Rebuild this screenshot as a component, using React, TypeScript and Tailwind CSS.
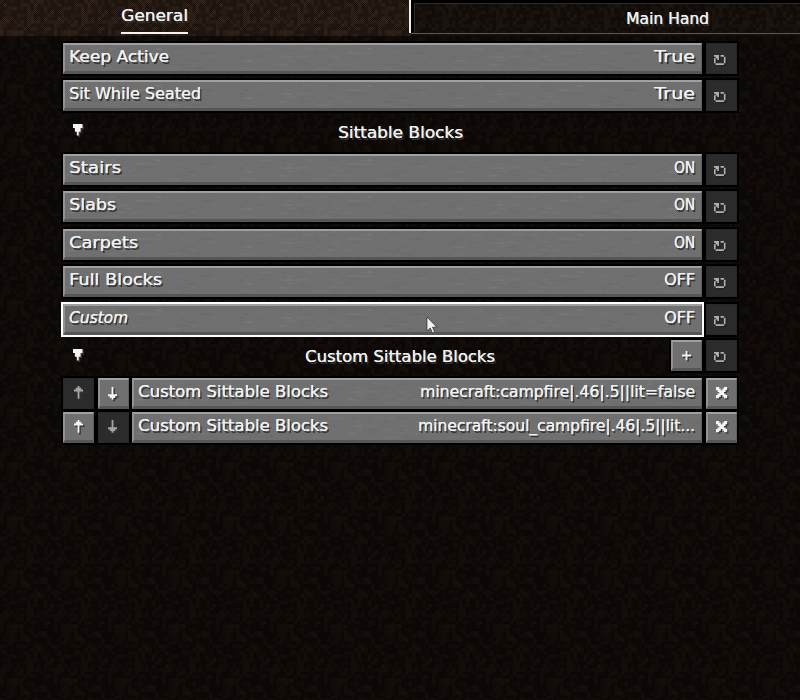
import { useLayoutEffect, useRef } from 'react'
import type { ReactNode } from 'react'

function Label({ text, width, className = '' }: { text: string; width: number; className?: string }) {
  const ref = useRef<HTMLSpanElement>(null)
  useLayoutEffect(() => {
    const el = ref.current
    if (!el) return
    el.style.transform = 'none'
    el.style.width = 'auto'
    const natural = el.getBoundingClientRect().width
    el.style.width = `${width}px`
    el.style.transform = `scaleX(${width / natural})`
  }, [text, width])
  return (
    <span ref={ref} className={`relative inline-block origin-left whitespace-pre text-left text-[16px] leading-[20px] text-[#f0f0f0] [text-shadow:0.2px_0_0_#f0f0f0,1.6px_1.6px_0_#343434] ${className}`}>
      {text}
    </span>
  )
}

const cells = Array.from({ length: 256 }, (_, i) => {
  const n = Math.sin(i * 91.731 + 17.13) * 43758.5453
  return n - Math.floor(n)
})

function Dirt({ id, base, light, strength }: { id: string; base: string; light: string; strength: number }) {
  return (
    <svg className="pointer-events-none absolute inset-0 h-full w-full">
      <defs>
        <pattern id={id} width="54" height="54" patternUnits="userSpaceOnUse">
          <rect width="54" height="54" fill={base} />
          {cells.map((v, i) => (
            <rect key={i} x={(i % 16) * 3.375} y={Math.floor(i / 16) * 3.375} width="3.4" height="3.4" fill={v > 0.5 ? light : '#000'} opacity={v > 0.5 ? (v - 0.5) * strength : 0.15} />
          ))}
        </pattern>
        <pattern id={`${id}-grid`} width="2" height="2" patternUnits="userSpaceOnUse">
          <rect width="1" height="1" fill="#000" opacity="0.3" />
          <rect x="1" y="1" width="1" height="1" fill="#000" opacity="0.3" />
        </pattern>
      </defs>
      <rect width="100%" height="100%" fill={`url(#${id})`} />
      <rect width="100%" height="100%" fill={`url(#${id}-grid)`} />
    </svg>
  )
}

function StoneGrain() {
  return (
    <svg className="pointer-events-none absolute inset-0 h-full w-full">
      <defs>
        <pattern id="grain" width="211" height="28" patternUnits="userSpaceOnUse">
          {cells.slice(0, 70).map((v, i) => (
            <rect key={i} x={v * 198} y={(i * 7.7) % 27} width={4 + (i % 4) * 3} height="1.5" fill={i % 2 ? '#fff' : '#000'} opacity="0.03" />
          ))}
        </pattern>
      </defs>
      <rect width="100%" height="100%" fill="url(#grain)" />
    </svg>
  )
}

const stone =
  'bg-[#707070] bg-[repeating-conic-gradient(#6b6b6b_0_25%,#747474_0_50%)] bg-[size:2px_2px] border-t-2 border-l-2 border-r border-b-[3px] border-t-[#a0a0a0] border-l-[#929292] border-r-[#606060] border-b-[#565656] outline-2 outline-black'
const dark = 'bg-[#2c2c2c] bg-[repeating-conic-gradient(#282828_0_25%,#2f2f2f_0_50%)] bg-[size:2px_2px] border border-[#282828] outline-2 outline-black'

function Square({ off = false, className = '', children }: { off?: boolean; className?: string; children: ReactNode }) {
  return <div className={`flex h-[31px] w-[31px] shrink-0 items-center justify-center ${off ? dark : stone} ${className}`}>{children}</div>
}

function Pixels({ rows, unit = 1.8, color = '#f4f4f4', shadow = '#343434', className = '' }: { rows: string[]; unit?: number; color?: string; shadow?: string; className?: string }) {
  const w = rows[0].length
  const d = rows
    .flatMap((row, y) => [...row.matchAll(/#+/g)].map((m) => `M${m.index} ${y}h${m[0].length}v1.08h-${m[0].length}z`))
    .join('')
  return (
    <svg className={`shrink-0 overflow-visible ${className}`} width={w * unit} height={rows.length * unit} viewBox={`0 0 ${w} ${rows.length}`}>
      <path d={d} fill={shadow} transform="translate(0.8 0.8)" />
      <path d={d} fill={color} />
    </svg>
  )
}

const up = ['..#..', '.###.', '#####', '..#..', '..#..', '..#..', '..#..']
const down = [...up].reverse()
const cross = ['##...##', '###.###', '.#####.', '..###..', '.#####.', '###.###', '##...##']
const plus = ['..#..', '..#..', '#####', '..#..', '..#..']
const triangle = ['#####', '#####', '.###.', '.###.', '..#..', '..#..']
const reset = ['###.##.', '.##...#', '#.#...#', '#.....#', '#.....#', '.#####.']

function Reset() {
  return (
    <Square off>
      <Pixels rows={reset} unit={1.65} color="#b0b0b0" shadow="#222" className="mt-[3px] -ml-[3px]" />
    </Square>
  )
}

function Bar({ name, nameWidth, value, valueWidth, hover = false }: { name: string; nameWidth: number; value: string; valueWidth: number; hover?: boolean }) {
  return (
    <div className={`relative flex h-[31px] min-w-0 flex-1 items-start justify-between pl-[4px] pr-[6px] pt-[2px] ${stone} ${hover ? 'outline-white' : ''}`}>
      <StoneGrain />
      <Label text={name} width={nameWidth} className={hover ? 'italic' : ''} />
      <Label text={value} width={valueWidth} />
    </div>
  )
}

type Option = { name: string; nameWidth: number; value: string; valueWidth: number; gap: string; hover?: boolean }

const general: Option[] = [
  { name: 'Keep Active', nameWidth: 100, value: 'True', valueWidth: 41, gap: 'mb-[6px]' },
  { name: 'Sit While Seated', nameWidth: 132, value: 'True', valueWidth: 41, gap: 'mb-0' },
]
const blocks: Option[] = [
  { name: 'Stairs', nameWidth: 52, value: 'ON', valueWidth: 21, gap: 'mb-[6px]' },
  { name: 'Slabs', nameWidth: 47, value: 'ON', valueWidth: 21, gap: 'mb-[7px]' },
  { name: 'Carpets', nameWidth: 69, value: 'ON', valueWidth: 21, gap: 'mb-[6px]' },
  { name: 'Full Blocks', nameWidth: 93, value: 'OFF', valueWidth: 31, gap: 'mb-[7px]' },
  { name: 'Custom', nameWidth: 59, value: 'OFF', valueWidth: 31, gap: 'mb-0', hover: true },
]

function Row({ gap, ...option }: Option) {
  return (
    <div className={`flex gap-[4px] ${gap}`}>
      <Bar {...option} />
      <Reset />
    </div>
  )
}

export default function App() {
  return (
    <div className="relative h-[700px] w-[800px] overflow-hidden bg-[#0b0806] font-['DejaVu_Sans',sans-serif]">
      <Dirt id="soil" base="#100b08" light="#30241b" strength={0.5} />
      <header className="relative flex h-[36px]">
        <Dirt id="top" base="#2a1d14" light="#5a4230" strength={0.6} />
        <div className="relative flex w-[409px] flex-col items-center pr-[101px] pt-[6px]">
          <Label text="General" width={67} />
          <div className="mt-[6px] h-[2px] w-[67px] bg-[#f4f4f4]" />
        </div>
        <div className="relative h-[33px] w-[2px] bg-[#eee]" />
        <div className="relative h-[36px] flex-1 bg-[#150e0a]">
          <div className="h-[34px] border-b border-[#5d5752] bg-black pl-[3px] pt-[3px]">
            <div className="relative flex h-[30px] justify-center border-l border-t border-[#302b28] pl-[120px] pt-[5px]">
              <Dirt id="tab" base="#18110c" light="#43342a" strength={0.5} />
              <Label text="Main Hand" width={83} />
            </div>
          </div>
        </div>
      </header>
      <main className="relative ml-[63px] mt-[7px] w-[674px]">
        {general.map((o) => <Row key={o.name} {...o} />)}
        <div className="flex h-[43px] items-center pl-[10px]">
          <Pixels rows={triangle} unit={1.9} className="-mt-[5px]" />
          <div className="flex-1 pr-[19px] text-center"><Label text="Sittable Blocks" width={125} /></div>
        </div>
        {blocks.map((o) => <Row key={o.name} {...o} />)}
        <div className="flex h-[43px] items-start gap-[4px] pl-[10px] pt-[5px]">
          <Pixels rows={triangle} unit={1.9} className="mt-[9px]" />
          <div className="flex-1 pl-[46px] pt-[5px] text-center"><Label text="Custom Sittable Blocks" width={190} /></div>
          <Square><Pixels rows={plus} className="-ml-px" /></Square>
          <Reset />
        </div>
        <div className="mb-[3px] flex gap-[4px]">
          <Square off><Pixels rows={up} color="#a5a5a5" className="-mt-[2px]" /></Square>
          <Square className="-mr-px"><Pixels rows={down} className="-ml-[3px]" /></Square>
          <Bar name="Custom Sittable Blocks" nameWidth={190} value="minecraft:campfire|.46|.5||lit=false" valueWidth={275} />
          <Square><Pixels rows={cross} unit={1.6} className="-ml-px" /></Square>
        </div>
        <div className="flex gap-[4px]">
          <Square><Pixels rows={up} className="-ml-px -mt-px" /></Square>
          <Square off className="-mr-px"><Pixels rows={down} color="#a5a5a5" className="-ml-[2px] -mt-[2px]" /></Square>
          <Bar name="Custom Sittable Blocks" nameWidth={190} value="minecraft:soul_campfire|.46|.5||lit..." valueWidth={277} />
          <Square><Pixels rows={cross} unit={1.6} className="-ml-px" /></Square>
        </div>
      </main>
      <svg className="absolute left-[426px] top-[316px]" width="12" height="19" viewBox="0 0 12 19">
        <path d="M1 1v14l3.3-3 2.2 5 2.2-1-2.2-4.8h4.3z" fill="#f4f4f4" stroke="#292929" strokeWidth="0.7" />
      </svg>
    </div>
  )
}
